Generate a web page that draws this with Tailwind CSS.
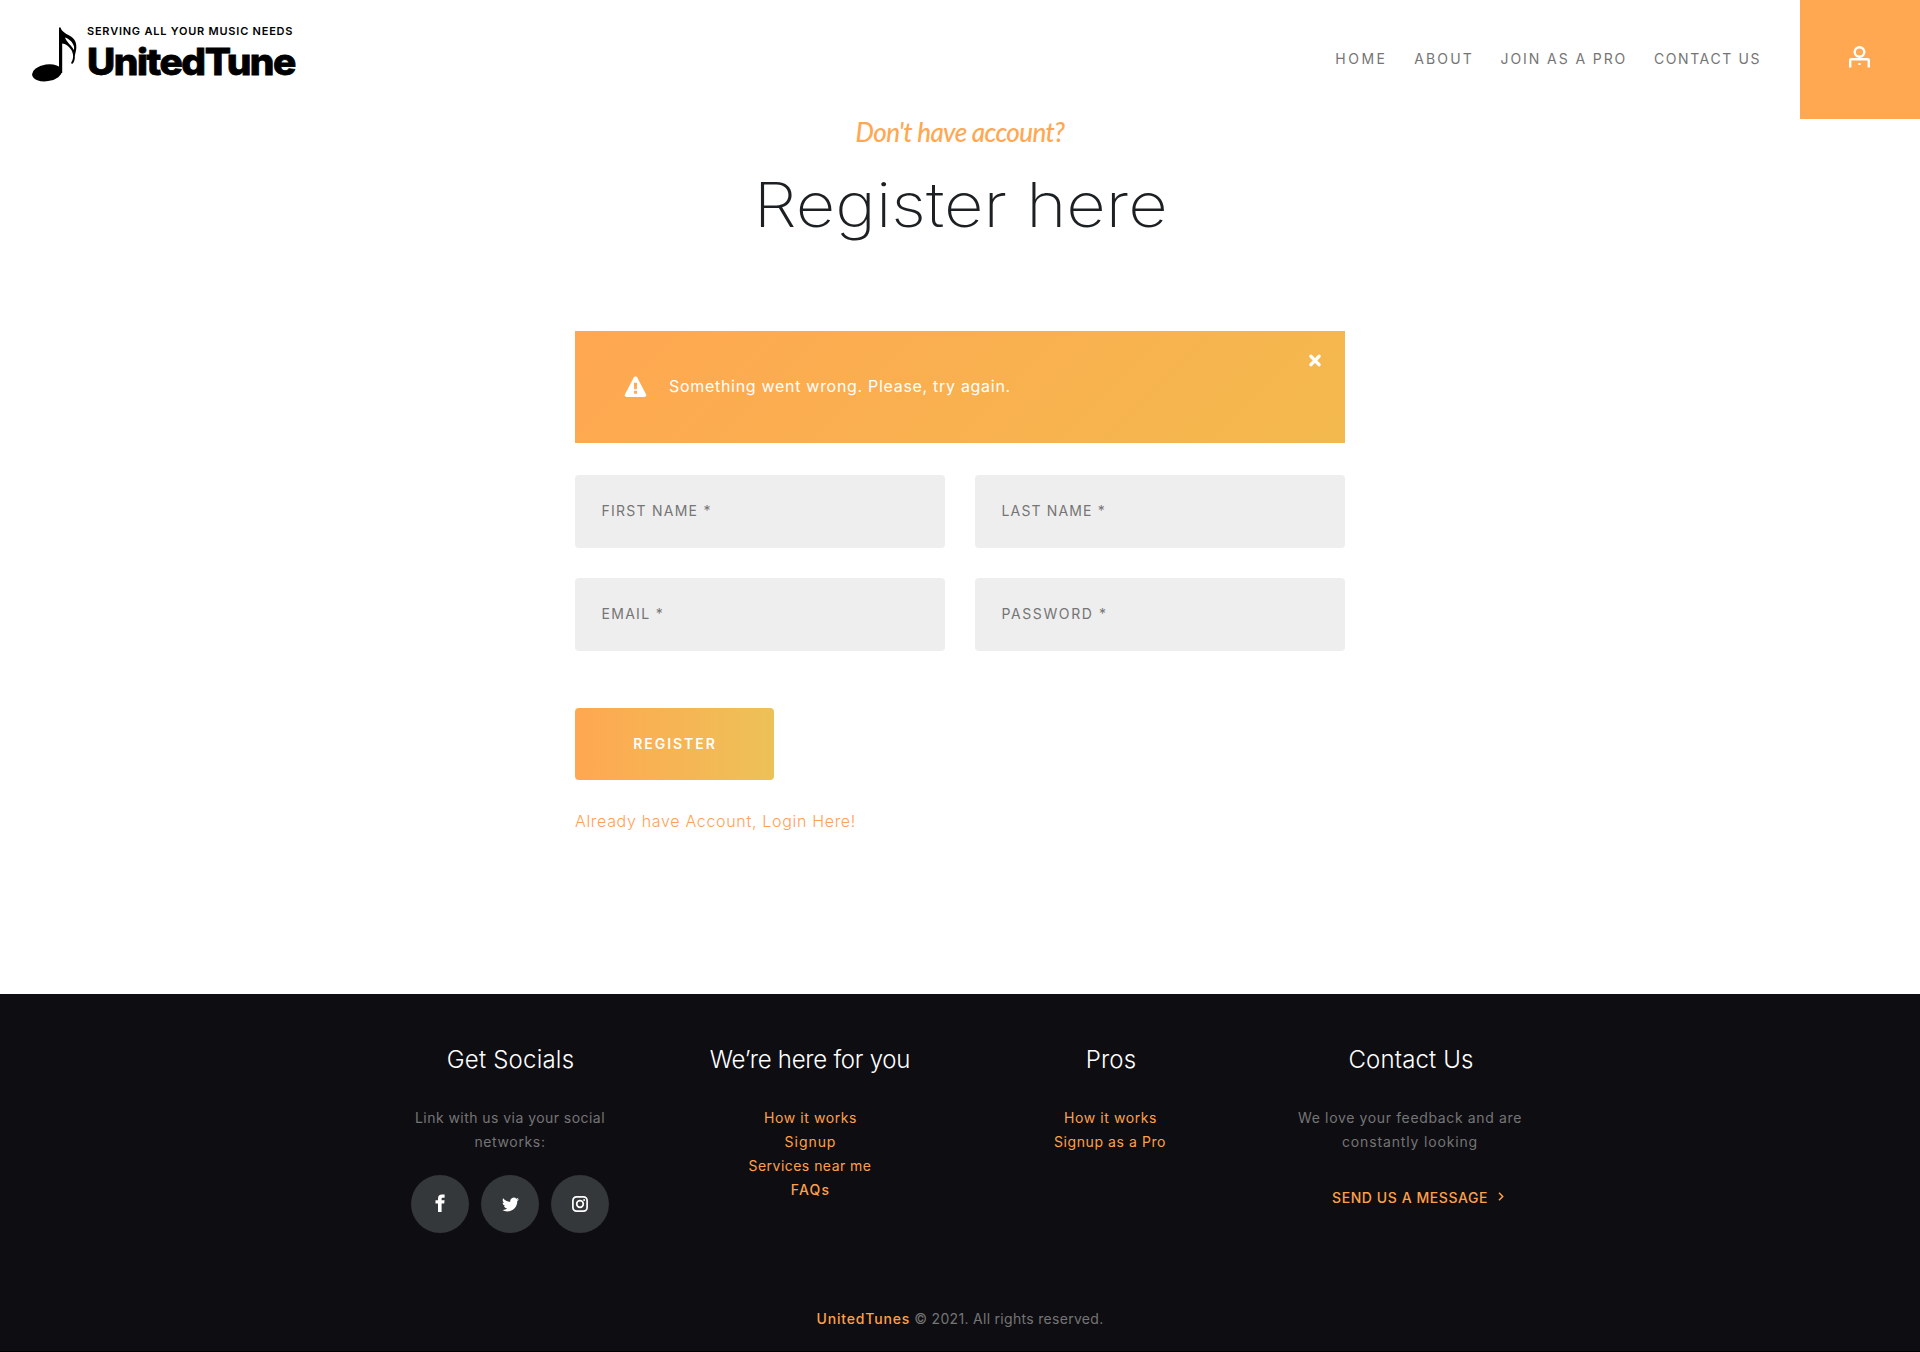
<!DOCTYPE html>
<html lang="en">
<head>
<meta charset="utf-8">
<title>UnitedTune - Register</title>
<script src="https://cdn.jsdelivr.net/npm/@tailwindcss/browser@4"></script>
</head>
<body class="flex h-[1352px] flex-col overflow-hidden bg-white font-[Inter,sans-serif] text-sm text-[#757575]">

<header class="flex h-[119px] shrink-0 items-stretch justify-between">
  <a href="#" class="flex items-start pl-[31px] pt-[26px] text-black">
    <svg class="mt-[1px] h-[56px] w-[47px]" viewBox="0 0 47 56" fill="currentColor">
      <ellipse cx="16" cy="45.800" rx="15" ry="8.400" transform="rotate(-8 16 45.800)"/>
      <path d="M28 .5h1.600c1 4 5 6 9.500 8.500 4.500 2.700 6.700 6.500 6.200 12-.2 3-1 5.300-1.500 8 .3 3-.5 6-2.300 7.700-1.200.5-1.700-.7-1-1.600 2.200-3.500 2.200-8.200-.3-12.300-2.600-4-5.700-6-9-6.300V46H28z"/>
      <path d="M34 10.500c4 1.500 7.500 4 9 9 .2 1.500.2 2.300-.2 3.500C40.500 18 36 16 34 10.500z" fill="#fff"/>
    </svg>
    <span class="flex flex-col pl-[9px]">
      <span class="whitespace-nowrap text-[11px] leading-[11px] font-semibold tracking-[0.78px]">SERVING ALL YOUR MUSIC NEEDS</span>
      <span class="mt-[5px] origin-left scale-x-[1.05] whitespace-nowrap text-[37px] leading-[39px] font-extrabold tracking-[-1.4px] [-webkit-text-stroke:0.8px_#000]">UnitedTune</span>
    </span>
  </a>
  <div class="flex">
    <nav class="flex items-center gap-[26.700px] pr-[39px] pb-[2px] whitespace-nowrap">
      <a href="#" class="tracking-[2.500px]">HOME</a>
      <a href="#" class="tracking-[2.14px]">ABOUT</a>
      <a href="#" class="tracking-[1.91px]">JOIN AS A PRO</a>
      <a href="#" class="tracking-[1.6px]">CONTACT US</a>
    </nav>
    <a href="#" aria-label="Account" class="flex w-[120px] items-center justify-center bg-[#ffa751] pr-px pb-[6px] text-white">
      <svg class="h-[22px] w-[21px]" viewBox="0 0 21 22" fill="none" stroke="currentColor" stroke-width="2.400">
        <circle cx="10.500" cy="6" r="4.800"/>
        <path d="M1.200 21.500V14.500Q1.200 13.300 2.400 13.300H18.600Q19.800 13.300 19.800 14.500V21.500"/>
        <path d="M9.300 18h2.400" stroke-width="2"/>
      </svg>
    </a>
  </div>
</header>

<main class="flex flex-col items-center">
  <p class="pt-[2px] font-[Lato,cursive] text-[26px] leading-[22px] font-medium italic tracking-[-0.65px] text-[#ffa751]">Don't have account?</p>
  <h1 class="mt-[25px] scale-x-[1.115] pl-[2px] text-[61.500px] leading-[74px] font-extralight text-[#1c2023]">Register here</h1>

  <div class="mt-[89px] w-[770px]">
    <div class="relative flex h-[112px] items-center bg-linear-135 from-[#ffa751] to-[#f3b94d] pl-[49px] text-base text-white">
      <svg class="mb-[2px] h-[21px] w-[23px]" viewBox="0 0 24 22">
        <path fill="currentColor" d="M10.300 1.200Q12-.8 13.700 1.200L23 19Q24 21.500 21.500 22H2.500Q0 21.500 1 19z"/>
        <path fill="#ffa953" d="M10.300 7h3.400l-.3 7h-2.800zM10.500 15.500h3v3h-3z"/>
      </svg>
      <span class="pb-[2px] pl-[22px] tracking-[0.7px]">Something went wrong. Please, try again.</span>
      <button aria-label="Close" class="absolute top-[23px] right-[24px]">
        <svg class="h-[13px] w-[12px]" viewBox="0 0 12 13" stroke="currentColor" stroke-width="3.400" stroke-linecap="round"><path d="M2 2.300l8 8.400M10 2.300L2 10.700"/></svg>
      </button>
    </div>

    <form class="mt-8">
      <div class="grid grid-cols-2 gap-[30px]">
        <label class="flex h-[73px] items-center rounded bg-[#eee] pb-px pl-[26.500px] tracking-[1.25px]">FIRST NAME *</label>
        <label class="flex h-[73px] items-center rounded bg-[#eee] pb-px pl-[26.500px] tracking-[1.15px]">LAST NAME *</label>
        <label class="flex h-[73px] items-center rounded bg-[#eee] pb-px pl-[26.500px] tracking-[1.3px]">EMAIL *</label>
        <label class="flex h-[73px] items-center rounded bg-[#eee] pb-px pl-[26.500px] tracking-[1.6px]">PASSWORD *</label>
      </div>
      <button type="button" class="mt-[57px] flex h-[72px] w-[199px] items-center justify-center rounded bg-linear-to-r from-[#ffa751] to-[#edc157] pl-px font-semibold tracking-[1.950px] text-white">REGISTER</button>
    </form>
    <a href="#" class="mt-[29px] block text-base leading-6 font-light tracking-[0.68px] text-[#ffa05a]">Already have Account, Login Here!</a>
  </div>
</main>

<footer class="mt-auto flex h-[358px] shrink-0 flex-col items-center border-b border-black bg-[#0e0d12] pt-[50px] text-center leading-6">
  <div class="grid h-[190px] w-[1200px] grid-cols-4">
    <section class="flex flex-col items-center">
      <h2 class="pl-px text-2xl leading-8 font-light tracking-[0.2px] text-white">Get Socials</h2>
      <p class="mt-[30px]"><span class="tracking-[0.45px]">Link with us via your social</span><br><span class="tracking-[0.64px]">networks:</span></p>
      <div class="mt-[21px] flex gap-3 text-white">
        <a href="#" aria-label="Facebook" class="flex size-[58px] items-center justify-center rounded-full bg-[#34383b]">
          <svg class="mb-[3px] h-[18px] w-[10px]" viewBox="0 0 10 18" fill="currentColor"><path d="M3 18V9.500H.5V6.300H3V4.500C3 1.800 4.300.5 7 .5h2.600v3.200H7.800C6.900 3.700 6.600 4 6.600 4.800v1.500h3L9.200 9.500H6.600V18z"/></svg>
        </a>
        <a href="#" aria-label="Twitter" class="flex size-[58px] items-center justify-center rounded-full bg-[#34383b]">
          <svg class="ml-px size-[17px]" viewBox="0 0 24 24" fill="currentColor"><path d="M23.950 4.570a10 10 0 0 1-2.820.77 4.960 4.960 0 0 0 2.160-2.720c-.95.550-2 .950-3.130 1.180a4.920 4.920 0 0 0-8.380 4.480C7.690 8.090 4.070 6.130 1.640 3.160a4.820 4.820 0 0 0-.67 2.480c0 1.710.87 3.210 2.190 4.100a4.900 4.900 0 0 1-2.230-.62v.06a4.920 4.920 0 0 0 3.950 4.830 5 5 0 0 1-2.210.08 4.940 4.940 0 0 0 4.600 3.420A9.870 9.870 0 0 1 0 19.540a13.990 13.990 0 0 0 7.550 2.210c9.050 0 14-7.500 14-13.980 0-.21 0-.42-.02-.63a9.940 9.940 0 0 0 2.460-2.550z"/></svg>
        </a>
        <a href="#" aria-label="Instagram" class="flex size-[58px] items-center justify-center rounded-full bg-[#34383b]">
          <svg class="size-[16px]" viewBox="0 0 16 16" fill="none" stroke="currentColor" stroke-width="1.700"><rect x=".9" y=".9" width="14.200" height="14.200" rx="3.600"/><circle cx="8" cy="8" r="3.300"/><circle cx="12.100" cy="3.900" r="1" fill="currentColor" stroke="none"/></svg>
        </a>
      </div>
    </section>
    <section class="text-[#ffa049]">
      <h2 class="text-2xl leading-8 font-light tracking-[-0.26px] text-white">We’re here for you</h2>
      <ul class="mt-[30px]">
        <li class="pl-px tracking-[0.6px]">How it works</li>
        <li class="pl-px tracking-[0.95px]">Signup</li>
        <li class="tracking-[0.47px]">Services near me</li>
        <li class="pl-px font-medium tracking-[1.2px]">FAQs</li>
      </ul>
    </section>
    <section class="text-[#ffa049]">
      <h2 class="pl-[2px] text-2xl leading-8 font-light tracking-[0.2px] text-white">Pros</h2>
      <ul class="mt-[30px]">
        <li class="pl-px tracking-[0.6px]">How it works</li>
        <li class="tracking-[0.57px]">Signup as a Pro</li>
      </ul>
    </section>
    <section class="flex flex-col items-center">
      <h2 class="pl-[2px] text-2xl leading-8 font-light tracking-[0.14px] text-white">Contact Us</h2>
      <p class="mt-[30px]"><span class="tracking-[0.64px]">We love your feedback and are</span><br><span class="tracking-[0.84px]">constantly looking</span></p>
      <a href="#" class="mt-8 flex items-center gap-[10px] pl-[16px] font-medium tracking-[0.57px] text-[#ffa049]">SEND US A MESSAGE
        <svg class="mb-[3px] h-[9px] w-[6px]" viewBox="0 0 6 9" fill="none" stroke="currentColor" stroke-width="1.500"><path d="M1 .8l3.700 3.700L1 8.200"/></svg>
      </a>
    </section>
  </div>
  <p class="mt-[73px]"><a href="#" class="font-medium tracking-[0.82px] text-[#ffa049]">UnitedTunes</a><span class="tracking-[0.3px]"> © 2021. All rights reserved.</span></p>
</footer>
</body>
</html>
